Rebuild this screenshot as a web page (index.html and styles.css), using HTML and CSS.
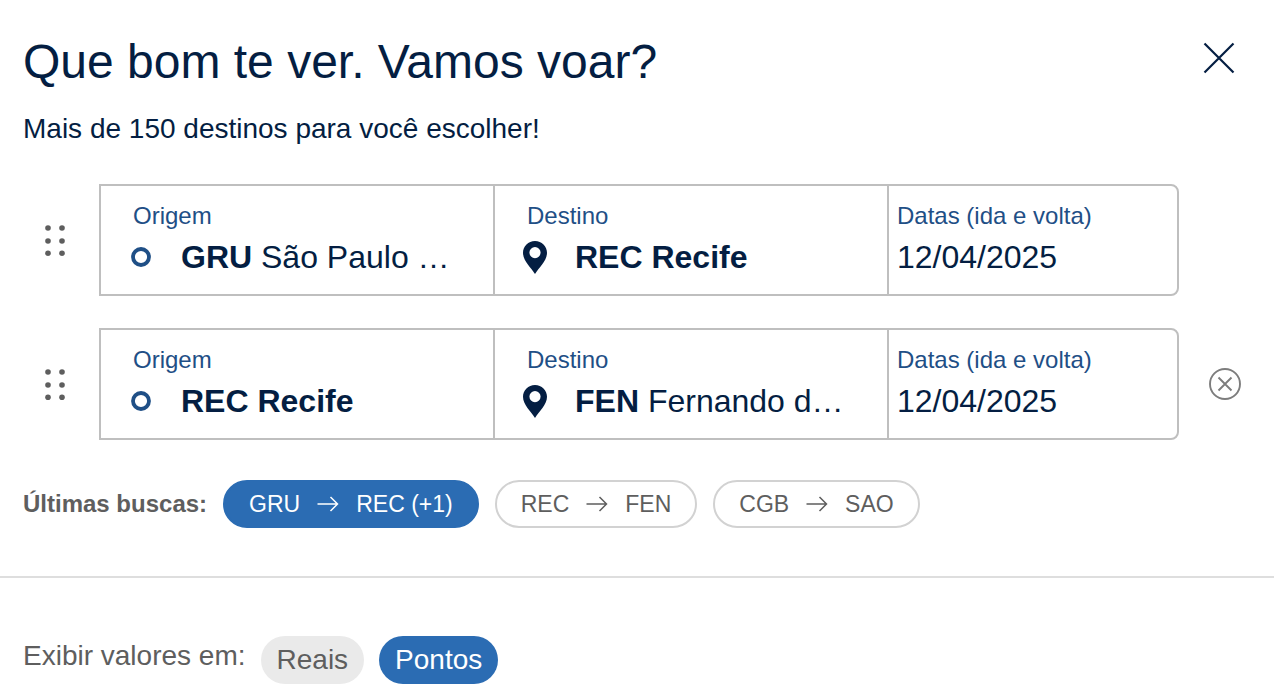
FILE: index.html
```html
<!DOCTYPE html>
<html lang="pt-BR">
<head>
  <meta charset="utf-8">
  <meta name="viewport" content="width=device-width, initial-scale=1">
  <title>Busca de voos</title>
  <link rel="stylesheet" href="styles.css">
</head>
<body>
  <svg class="sprite" aria-hidden="true">
    <symbol id="grip" viewBox="0 0 20 32">
      <g fill="#5e5e5e">
        <circle cx="3" cy="4" r="2.8"/><circle cx="17" cy="4" r="2.8"/>
        <circle cx="3" cy="17" r="2.8"/><circle cx="17" cy="17" r="2.8"/>
        <circle cx="3" cy="29.200" r="2.8"/><circle cx="17" cy="29.200" r="2.8"/>
      </g>
    </symbol>
    <symbol id="ring" viewBox="0 0 20 20">
      <circle cx="10" cy="10" r="8" fill="none" stroke="#1f4f86" stroke-width="3.8"/>
    </symbol>
    <symbol id="pin" viewBox="0 0 24 33">
      <path fill="#041e42" fill-rule="evenodd" d="M12 0C5.3 0 0 5.3 0 11.8C0 20 8 26.500 12 33C16 26.500 24 20 24 11.800C24 5.300 18.700 0 12 0ZM12 6A5.600 5.600 0 1 1 12 17.200A5.600 5.600 0 1 1 12 6Z"/>
    </symbol>
    <symbol id="arrow" viewBox="0 0 22 16">
      <path fill="none" stroke="currentColor" stroke-width="1.5" d="M0.500 8H20.500M13.500 1L20.500 8L13.500 15"/>
    </symbol>
  </svg>

  <main class="search">
    <header class="header">
      <div>
        <h1 class="title">Que bom te ver. Vamos voar?</h1>
        <p class="subtitle">Mais de 150 destinos para você escolher!</p>
      </div>
      <button class="icon-button close" type="button" aria-label="Fechar">
        <svg width="32" height="32" viewBox="0 0 32 32"><path d="M1.500 1.500L30.500 30.500M30.500 1.500L1.500 30.500" stroke="#041e42" stroke-width="2.200"/></svg>
      </button>
    </header>

    <div class="legs">
      <div class="leg">
        <button class="icon-button grip" type="button" aria-label="Reordenar trecho 1"><svg width="20" height="32"><use href="#grip"/></svg></button>
        <div class="card">
          <button class="field" type="button">
            <span class="label">Origem</span>
            <span class="place"><span class="mark"><svg width="20" height="20"><use href="#ring"/></svg></span><span class="value"><b>GRU</b> São Paulo …</span></span>
          </button>
          <button class="field" type="button">
            <span class="label">Destino</span>
            <span class="place"><span class="mark"><svg width="24" height="33"><use href="#pin"/></svg></span><span class="value"><b>REC Recife</b></span></span>
          </button>
          <div class="field field-date">
            <label class="label" for="date-1">Datas (ida e volta)</label>
            <input class="value date" id="date-1" type="text" value="12/04/2025">
          </div>
        </div>
      </div>

      <div class="leg">
        <button class="icon-button grip" type="button" aria-label="Reordenar trecho 2"><svg width="20" height="32"><use href="#grip"/></svg></button>
        <div class="card">
          <button class="field" type="button">
            <span class="label">Origem</span>
            <span class="place"><span class="mark"><svg width="20" height="20"><use href="#ring"/></svg></span><span class="value"><b>REC Recife</b></span></span>
          </button>
          <button class="field" type="button">
            <span class="label">Destino</span>
            <span class="place"><span class="mark"><svg width="24" height="33"><use href="#pin"/></svg></span><span class="value"><b>FEN</b> Fernando d…</span></span>
          </button>
          <div class="field field-date">
            <label class="label" for="date-2">Datas (ida e volta)</label>
            <input class="value date" id="date-2" type="text" value="12/04/2025">
          </div>
        </div>
        <button class="icon-button remove" type="button" aria-label="Remover trecho 2">
          <svg width="32" height="32" viewBox="0 0 32 32" fill="none" stroke="#7d7d7d" stroke-width="1.900"><circle cx="16" cy="16" r="15"/><path d="M9.500 9.500L22.500 22.500M22.500 9.500L9.500 22.500"/></svg>
        </button>
      </div>
    </div>

    <div class="recent">
      <span class="recent-label">Últimas buscas:</span>
      <button class="chip chip-active" type="button">GRU <svg width="22" height="16"><use href="#arrow"/></svg> REC (+1)</button>
      <button class="chip" type="button">REC <svg width="22" height="16"><use href="#arrow"/></svg> FEN</button>
      <button class="chip" type="button">CGB <svg width="22" height="16"><use href="#arrow"/></svg> SAO</button>
    </div>
  </main>

  <footer class="currency">
    <span class="currency-label">Exibir valores em:</span>
    <button class="toggle" type="button" aria-pressed="false">Reais</button>
    <button class="toggle toggle-active" type="button" aria-pressed="true">Pontos</button>
  </footer>
</body>
</html>
```

FILE: styles.css
```css
* {
  box-sizing: border-box;
}

body {
  margin: 0;
  background: #fff;
  color: #041e42;
  font-family: "Liberation Sans", Arial, sans-serif;
}

button,
input {
  margin: 0;
  padding: 0;
  border: 0;
  background: none;
  color: inherit;
  font: inherit;
}

button {
  cursor: pointer;
}

svg {
  display: block;
  flex: none;
}

.sprite {
  position: absolute;
  width: 0;
  height: 0;
}

.search {
  padding: 36px 0 48px 23px;
  border-bottom: 2px solid #dedede;
}

.header {
  display: flex;
  justify-content: space-between;
  align-items: flex-start;
  padding-right: 39px;
}

.title {
  margin: 0;
  font-size: 48px;
  font-weight: 400;
  line-height: 52px;
}

.subtitle {
  margin: 25px 0 0;
  font-size: 28px;
  line-height: 32px;
}

.icon-button {
  display: flex;
  align-items: center;
  justify-content: center;
}

.close {
  margin-top: 6px;
}

.legs {
  display: flex;
  flex-direction: column;
  gap: 32px;
  margin-top: 39px;
}

.leg {
  display: grid;
  grid-template-columns: 76px 1fr 95px;
  align-items: center;
}

.grip {
  justify-self: start;
  padding: 12px 22px;
}

.remove {
  justify-self: start;
  margin-left: 30px;
}

.card {
  display: grid;
  grid-template-columns: 394fr 394fr 288fr;
  min-height: 112px;
  border: 2px solid #bfbfbf;
  border-radius: 0 8px 8px 0;
}

.field {
  display: flex;
  flex-direction: column;
  gap: 5px;
  min-width: 0;
  padding: 14px 0 14px 32px;
  border-right: 2px solid #bfbfbf;
  text-align: left;
}

.field-date {
  padding-left: 8px;
  border-right: 0;
}

.label {
  color: #1f4f86;
  font-size: 24px;
  line-height: 32px;
}

.place {
  display: flex;
  align-items: center;
  gap: 22px;
  margin-left: -10px;
}

.mark {
  display: flex;
  justify-content: center;
  width: 36px;
}

.value {
  font-size: 32px;
  line-height: 40px;
  white-space: nowrap;
}

.date {
  width: 100%;
  height: 40px;
}

.recent {
  display: flex;
  align-items: center;
  gap: 16px;
  margin-top: 40px;
  color: #5e5e5e;
  font-size: 24px;
}

.recent-label {
  font-weight: 700;
}

.chip {
  display: flex;
  align-items: center;
  gap: 17px;
  height: 48px;
  padding: 0 24px;
  border: 2px solid #d2d2d2;
  border-radius: 24px;
  font-size: 23px;
}

.chip-active {
  border-color: #2b6cb3;
  background: #2b6cb3;
  color: #fff;
}

.currency {
  display: flex;
  align-items: flex-start;
  gap: 15px;
  padding: 58px 23px 14px;
  color: #5e5e5e;
  font-size: 28px;
}

.currency-label {
  line-height: 40px;
}

.toggle {
  height: 48px;
  padding: 0 16px;
  border-radius: 24px;
  background: #eaeaea;
}

.toggle-active {
  background: #2b6cb3;
  color: #fff;
}
```
